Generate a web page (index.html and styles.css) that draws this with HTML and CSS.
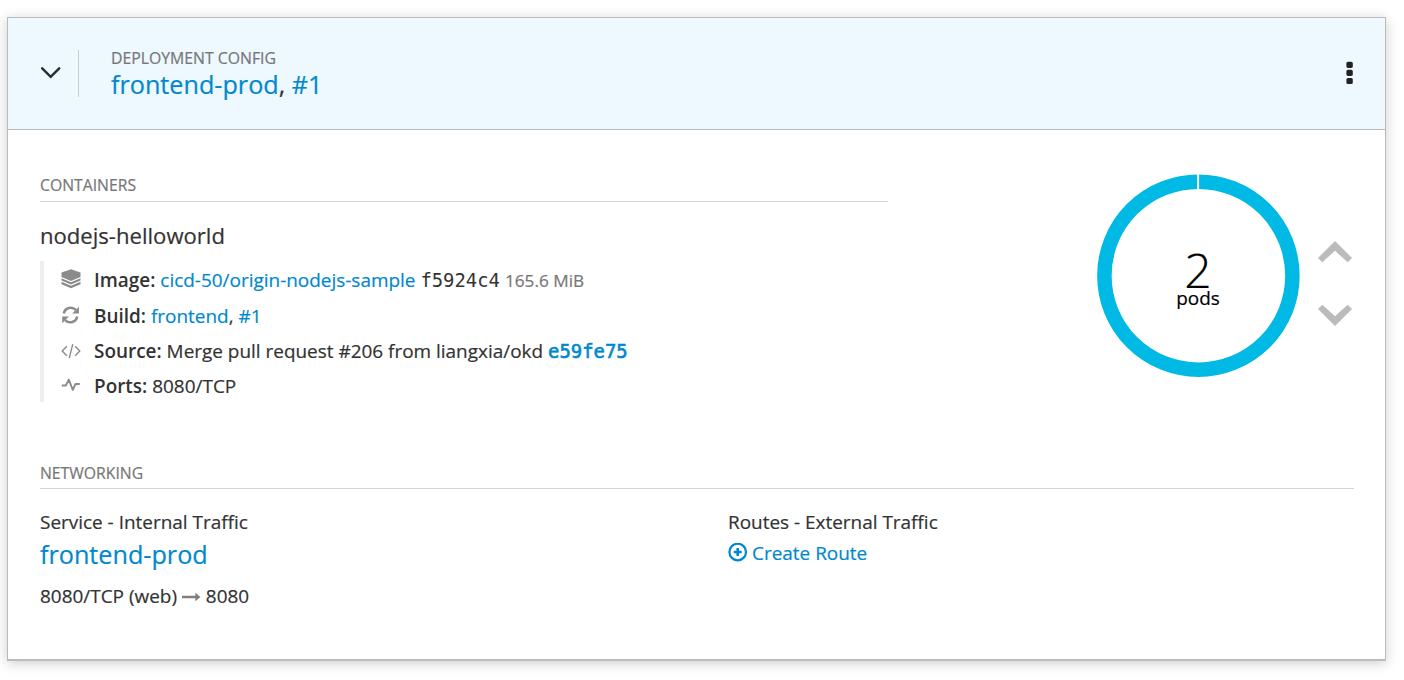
FILE: index.html
```html
<!DOCTYPE html>
<html lang="en">
<head>
<meta charset="utf-8">
<title>frontend-prod</title>
<link rel="stylesheet" href="styles.css">
</head>
<body>
<article class="card">
  <header class="card-header">
    <svg class="toggle" width="20" height="14" viewBox="0 0 20 14"><path d="M1.200 2.300 L9.700 10.800 L18.200 2.300" fill="none" stroke="#292e34" stroke-width="2.500" stroke-linecap="round"/></svg>
    <div class="title">
      <div class="label">DEPLOYMENT CONFIG</div>
      <h1 class="name"><a>frontend-prod</a>, <a>#1</a></h1>
    </div>
    <svg class="kebab" width="7" height="24" viewBox="0 0 7 24" fill="#222"><rect x=".4" width="6.400" height="6.200" y=".7" rx="1.700"/><rect x=".4" width="6.400" height="6.200" y="8.800" rx="1.700"/><rect x=".4" width="6.400" height="6.200" y="16.900" rx="1.700"/></svg>
  </header>
  <div class="card-body">
    <div class="top">
      <section class="containers">
        <h2 class="section-title">CONTAINERS</h2>
        <h3 class="container-name">nodejs-helloworld</h3>
        <ul class="details">
          <li>
            <svg class="icon" viewBox="0 0 20 20" fill="#8b8b8b"><path d="M10 .2 19.500 3.500V8L10 12 .5 8V3.500z"/><path d="M.5 9.300 10 13.200 19.500 9.300V11.500L10 15.500.5 11.500z"/><path d="M.5 12.800 10 16.800 19.500 12.800V15.200L10 19.200 .5 15.200z"/></svg>
            <span><b>Image:</b> <a>cicd-50/origin-nodejs-sample</a> <span class="hash">f5924c4</span> <small>165.6 MiB</small></span>
          </li>
          <li class="build">
            <svg class="icon" viewBox="0 0 20 20"><path d="M2.800 8.500A7 7 0 0 1 14.800 4.900M16.200 11.500A7 7 0 0 1 4.200 15.100" fill="none" stroke="#8b8b8b" stroke-width="2.500"/><path d="M17.900 1.800V8.500H11.200zM1.200 18.200V11.500H7.900z" fill="#8b8b8b"/></svg>
            <span><b>Build:</b> <a>frontend</a>, <a>#1</a></span>
          </li>
          <li>
            <svg class="icon low" viewBox="0 0 20 20" fill="none" stroke="#8b8b8b" stroke-width="1.400"><path d="M5.800 5.200 1.200 10 5.800 14.800M14.200 5.200 18.800 10 14.200 14.800M11.800 3.200 8.200 17.200"/></svg>
            <span><b>Source:</b> Merge pull request #206 from liangxia/okd <a class="hash strong">e59fe75</a></span>
          </li>
          <li>
            <svg class="icon" viewBox="0 0 20 20" fill="none" stroke="#8b8b8b" stroke-width="1.900" stroke-linejoin="round"><path d="M.8 10.500H4.800L7.800 4.700 11.800 14.800 14.500 9H18.800"/></svg>
            <span><b>Ports:</b> 8080/TCP</span>
          </li>
        </ul>
      </section>
      <div class="pods">
        <div class="donut">
          <svg class="ring" width="204" height="204" viewBox="0 0 204 204"><circle cx="102.400" cy="101.700" r="94" fill="none" stroke="#00b9e4" stroke-width="14.500"/><path d="M102.100 0V16" stroke="#fff" stroke-width="2"/></svg>
          <div class="count">2</div>
          <div class="unit">pods</div>
        </div>
        <div class="scale">
          <svg width="36" height="23" viewBox="0 0 36 23"><path d="M18 1.500 34.500 18 30.700 21.800 18 10.200 5.300 21.800 1.500 18z" fill="#bbb" stroke="#bbb" stroke-linejoin="round"/></svg>
          <svg width="36" height="23" viewBox="0 0 36 23"><path d="M18 21.500 34.500 5 30.700 1.200 18 12.800 5.300 1.200 1.500 5z" fill="#bbb" stroke="#bbb" stroke-linejoin="round"/></svg>
        </div>
      </div>
    </div>
    <section class="networking">
      <h2 class="section-title">NETWORKING</h2>
      <div class="columns">
        <div>
          <div class="traffic">Service - Internal Traffic</div>
          <div class="service"><a>frontend-prod</a></div>
          <div class="ports">8080/TCP (web) <svg class="arrow" width="19" height="10" viewBox="0 0 19 10"><path d="M0 3.700H13.300V.8L18.500 5 13.300 9.200V6.300H0z" fill="#808080"/></svg> 8080</div>
        </div>
        <div>
          <div class="traffic">Routes - External Traffic</div>
          <a class="create"><svg width="20" height="20" viewBox="0 0 20 20" fill="none" stroke="#0088ce"><circle cx="9.700" cy="9" r="8.300" stroke-width="2.200"/><path d="M9.700 5V13M5.700 9H13.700" stroke-width="2.600"/></svg>Create Route</a>
        </div>
      </div>
    </section>
  </div>
</article>
</body>
</html>
```
FILE: styles.css
```css
* { box-sizing: border-box; }
body {
  margin: 0;
  padding: 17px 18px 19px 7px;
  height: 680px;
  overflow: hidden;
  background: #fff;
  color: #333;
  font: 18.950px/26px "Open Sans", "Noto Sans", sans-serif;
  white-space: nowrap;
  -webkit-text-stroke: .2px;
}
h1, h2, h3, ul { margin: 0; padding: 0; font-weight: 400; }
a { color: #0088ce; }
b { font-weight: 600; -webkit-text-stroke: 0; }
svg { display: block; flex: none; }
.card {
  height: 644px;
  border: 1px solid #bbb;
  border-bottom-width: 2px;
  background: #fff;
  box-shadow: 0 2px 12px rgba(0, 0, 0, .2);
}
.card-header {
  display: flex;
  height: 112px;
  padding: 32px 32px 0;
  background: #edf8ff;
  border-bottom: 1px solid #b5bbc0;
}
.toggle { margin: 16px 17px 0 1px; }
.title {
  flex: 1;
  height: 47px;
  padding-left: 32px;
  border-left: 1px solid #ccc;
}
.label { margin-top: -1px; font-size: 15.800px; line-height: 18px; color: #777; }
.name { font-size: 25.200px; line-height: 34px; }
.kebab { margin-top: 11px; }
.card-body { padding: 44px 31px 0 32px; }
.top { display: flex; justify-content: space-between; height: 287px; }
.containers { width: 848px; }
.section-title {
  height: 28px;
  font-size: 15.750px;
  line-height: 22px;
  color: #777;
  border-bottom: 1px solid #d5d5d5;
}
.networking .section-title { line-height: 24px; }
.container-name { margin-top: 18px; font-size: 22.100px; line-height: 30px; }
.details {
  height: 141px;
  margin-top: 11px;
  padding: 6px 0 0 17px;
  border-left: 4px solid #eee;
  list-style: none;
}
.details li { display: flex; height: 35.300px; }
.details .build { height: 34.600px; margin-top: .7px; }
.icon { width: 20px; height: 20px; margin: 2px 13.500px 0 -.5px; }
.low { margin-top: 3px; }
.details small { font-size: 17.200px; color: #777; }
.hash { font-family: "DejaVu Sans Mono", monospace; font-size: 18.900px; -webkit-text-stroke: 0; }
.strong { -webkit-text-stroke: .6px; }
.pods { display: flex; }
.donut {
  position: relative;
  width: 204px;
  height: 204px;
  padding-top: 71px;
  text-align: center;
  color: #000;
}
.ring { position: absolute; top: 0; left: 0; }
.count { position: relative; font-size: 48px; font-weight: 300; line-height: 50px; -webkit-text-stroke: .2px; }
.unit { position: relative; margin-top: -10px; line-height: 26px; }
.scale { display: flex; flex-direction: column; gap: 41px; padding-top: 66px; margin: 0 1px 0 17px; }
.columns { display: grid; grid-template-columns: 688px 1fr; padding-top: 20px; }
.service { margin-top: 2px; font-size: 25.200px; line-height: 34px; }
.ports { margin-top: 12px; }
.arrow { display: inline-block; vertical-align: 1px; }
.create { display: flex; align-items: center; gap: 4px; margin-top: 5px; }
```
